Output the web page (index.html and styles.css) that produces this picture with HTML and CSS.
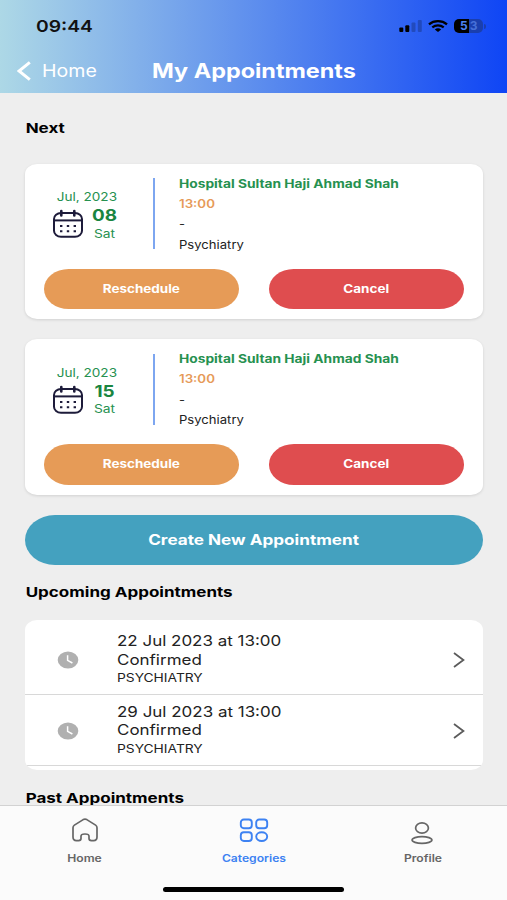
FILE: index.html
```html
<!DOCTYPE html>
<html lang="en">
<head>
    <meta charset="UTF-8">
    <meta name="viewport" content="width=device-width, initial-scale=1.0">
    <title>My Appointments</title>
    <link rel="stylesheet" href="styles.css">
</head>
<body>

<div class="app">
    <!-- Header -->
    <header class="header">
        <div class="status-bar">
            <span class="status-time">09:44</span>
            <div class="status-icons">
                <svg width="24" height="12" viewBox="0 0 24 12">
                    <rect x="0.3" y="7.5" width="4" height="4.5" rx="1"/>
                    <rect x="6.3" y="5.2" width="4" height="6.8" rx="1"/>
                    <rect x="12.5" y="2.6" width="4" height="9.4" rx="1" opacity="0.22"/>
                    <rect x="18.8" y="0" width="4" height="12" rx="1" opacity="0.22"/>
                </svg>
                <svg class="wifi" width="20" height="12" viewBox="0 0 20 12" fill="none" stroke="#000" stroke-width="2.3">
                    <path d="M1 4.3C6 0.1 14 0.1 19 4.3"/>
                    <path d="M4.3 7.3C7.6 4.7 12.4 4.7 15.7 7.3"/>
                    <path d="M10 12L6.8 9.4C8.6 8 11.4 8 13.2 9.4Z" fill="#000" stroke="none"/>
                </svg>
                <div class="battery"><span>5</span><span class="battery-low">3</span></div>
                <div class="battery-tip"></div>
            </div>
        </div>
        <div class="nav-bar">
            <a class="back" href="#">
                <svg width="14" height="20" viewBox="0 0 14 20" fill="none" stroke="#fff" stroke-width="3">
                    <path d="M12.8 1.4L2 10L12.8 18.6"/>
                </svg>
                <span class="back-label">Home</span>
            </a>
            <h1 class="title">My Appointments</h1>
        </div>
    </header>

    <main class="content">
        <h2 class="section-title">Next</h2>

        <div class="card">
            <div class="card-info">
                <div class="date">
                    <div class="month">Jul, 2023</div>
                    <div class="day-row">
                        <svg class="calendar" width="32" height="30" viewBox="0 0 32 30" fill="none" stroke="#1d1b3a" stroke-width="2">
                            <rect x="2" y="4" width="28" height="23.8" rx="7" ry="6"/>
                            <path d="M2.4 11.4H29.6"/>
                            <path d="M9.3 2V6.4M22.3 2V6.4" stroke-width="2.6" stroke-linecap="round"/>
                            <path d="M8 17h2.4M14.8 17h2.4M21.6 17h2.4M8 22.2h2.4M14.8 22.2h2.4M21.6 22.2h2.4" stroke-width="2"/>
                        </svg>
                        <div class="day">
                            <div class="day-number">08</div>
                            <div class="day-name">Sat</div>
                        </div>
                    </div>
                </div>
                <div class="details">
                    <div class="hospital">Hospital Sultan Haji Ahmad Shah</div>
                    <div class="time">13:00</div>
                    <div class="doctor">-</div>
                    <div class="clinic">Psychiatry</div>
                </div>
            </div>
            <div class="card-actions">
                <button class="btn btn-reschedule"><span>Reschedule</span></button>
                <button class="btn btn-cancel"><span>Cancel</span></button>
            </div>
        </div>

        <div class="card">
            <div class="card-info">
                <div class="date">
                    <div class="month">Jul, 2023</div>
                    <div class="day-row">
                        <svg class="calendar" width="32" height="30" viewBox="0 0 32 30" fill="none" stroke="#1d1b3a" stroke-width="2">
                            <rect x="2" y="4" width="28" height="23.8" rx="7" ry="6"/>
                            <path d="M2.4 11.4H29.6"/>
                            <path d="M9.3 2V6.4M22.3 2V6.4" stroke-width="2.6" stroke-linecap="round"/>
                            <path d="M8 17h2.4M14.8 17h2.4M21.6 17h2.4M8 22.2h2.4M14.8 22.2h2.4M21.6 22.2h2.4" stroke-width="2"/>
                        </svg>
                        <div class="day">
                            <div class="day-number">15</div>
                            <div class="day-name">Sat</div>
                        </div>
                    </div>
                </div>
                <div class="details">
                    <div class="hospital">Hospital Sultan Haji Ahmad Shah</div>
                    <div class="time">13:00</div>
                    <div class="doctor">-</div>
                    <div class="clinic">Psychiatry</div>
                </div>
            </div>
            <div class="card-actions">
                <button class="btn btn-reschedule"><span>Reschedule</span></button>
                <button class="btn btn-cancel"><span>Cancel</span></button>
            </div>
        </div>

        <button class="btn-create"><span>Create New Appointment</span></button>

        <h2 class="section-title upcoming">Upcoming Appointments</h2>

        <div class="list">
            <div class="list-item">
                <svg class="clock" width="22" height="18" viewBox="0 0 22 18">
                    <ellipse cx="11" cy="9" rx="10.3" ry="8.6" fill="#b0b0b0"/>
                    <path d="M10.6 4.2V9.4L15.4 12" fill="none" stroke="#fff" stroke-width="1.5"/>
                </svg>
                <div class="list-text">
                    <div class="when">22 Jul 2023 at 13:00</div>
                    <div class="state">Confirmed</div>
                    <div class="dept">PSYCHIATRY</div>
                </div>
                <svg class="chevron" width="12" height="16" viewBox="0 0 12 16" fill="none" stroke="#5c5c5c" stroke-width="1.8">
                    <path d="M1 1L10.4 8L1 15"/>
                </svg>
            </div>
            <div class="list-item">
                <svg class="clock" width="22" height="18" viewBox="0 0 22 18">
                    <ellipse cx="11" cy="9" rx="10.3" ry="8.6" fill="#b0b0b0"/>
                    <path d="M10.6 4.2V9.4L15.4 12" fill="none" stroke="#fff" stroke-width="1.5"/>
                </svg>
                <div class="list-text">
                    <div class="when">29 Jul 2023 at 13:00</div>
                    <div class="state">Confirmed</div>
                    <div class="dept">PSYCHIATRY</div>
                </div>
                <svg class="chevron" width="12" height="16" viewBox="0 0 12 16" fill="none" stroke="#5c5c5c" stroke-width="1.8">
                    <path d="M1 1L10.4 8L1 15"/>
                </svg>
            </div>
        </div>

        <h2 class="section-title past">Past Appointments</h2>
    </main>

    <!-- Bottom tabs -->
    <footer class="footer">
        <nav class="tabs">
            <a class="tab" href="#">
                <svg width="28" height="26" viewBox="0 0 28 26" fill="none" stroke="#666" stroke-width="1.7" stroke-linejoin="round">
                    <path d="M2 10.8Q2 9 3.4 8.1L12.2 2.6Q14 1.6 15.8 2.6L24.6 8.1Q26 9 26 10.8V20Q26 23.6 22.6 23.6H20.4Q18 23.6 18 21.6V19.2Q18 17 14 17T10 19.2V21.6Q10 23.6 7.6 23.6H5.4Q2 23.6 2 20Z"/>
                </svg>
                <span>Home</span>
            </a>
            <a class="tab active" href="#">
                <svg width="30" height="26" viewBox="0 0 30 26" fill="none" stroke="#3d82f2" stroke-width="1.9">
                    <rect x="1.8" y="2.5" width="11" height="8.8" rx="3"/>
                    <rect x="17.2" y="2.5" width="11" height="8.8" rx="3"/>
                    <rect x="1.8" y="15.2" width="11" height="8.8" rx="3"/>
                    <ellipse cx="22.7" cy="19.6" rx="5.5" ry="4.4"/>
                </svg>
                <span>Categories</span>
            </a>
            <a class="tab" href="#">
                <svg width="24" height="28" viewBox="0 0 24 28" fill="none" stroke="#666" stroke-width="1.7">
                    <ellipse cx="11" cy="11" rx="6.4" ry="5.2"/>
                    <ellipse cx="11" cy="23" rx="9.9" ry="3.4"/>
                </svg>
                <span>Profile</span>
            </a>
        </nav>
        <div class="home-indicator"></div>
    </footer>
</div>

</body>
</html>
```
FILE: styles.css
```css
/* Global */
* {
    box-sizing: border-box;
}

body {
    margin: 0;
    font-family: Inter, "Open Sans", sans-serif;
    background-color: #eeeeee;
    color: #111;
}

h1, h2 {
    margin: 0;
}

a {
    text-decoration: none;
}

.app {
    width: 507px;
    height: 900px;
    display: flex;
    flex-direction: column;
    overflow: hidden;
}

/* Header */
.header {
    height: 93px;
    flex-shrink: 0;
    background: linear-gradient(to right, #add8e6, #0f45f5);
}

.status-bar {
    display: flex;
    justify-content: space-between;
    align-items: center;
    height: 52px;
    padding: 0 21px 0 36px;
}

.status-time {
    font-size: 16.5px;
    font-weight: 600;
    transform: scaleX(1.17);
    transform-origin: left;
}

.status-icons {
    display: flex;
    align-items: center;
}

.wifi {
    margin: 0 6px 0 5px;
}

.battery {
    display: flex;
    width: 29px;
    height: 14px;
    border-radius: 5px;
    overflow: hidden;
    background: linear-gradient(to right, #000 52%, #1a3fae 52%);
    color: #4d83f5;
    font-size: 12px;
    font-weight: 700;
    line-height: 14px;
    padding-left: 6px;
    gap: 2px;
}

.battery-low {
    color: #4670d8;
}

.battery-tip {
    width: 2px;
    height: 5px;
    margin-left: 1px;
    border-radius: 0 2px 2px 0;
    background-color: #1a3fae;
}

.nav-bar {
    display: flex;
    align-items: center;
    height: 38px;
    padding-left: 17px;
}

.back {
    display: flex;
    align-items: center;
    width: 135px;
    gap: 11px;
    color: #fff;
}

.back-label {
    font-size: 17px;
    transform: scaleX(1.15);
    transform-origin: left;
}

.title {
    font-size: 19.5px;
    font-weight: 700;
    color: #fff;
    white-space: nowrap;
    transform: scaleX(1.2);
    transform-origin: left;
}

/* Content */
.content {
    flex: 1;
    min-height: 0;
    padding: 25px 24.5px 0 25px;
    overflow: hidden;
}

.section-title {
    padding-left: 0.5px;
    font-size: 13.5px;
    font-weight: 700;
    line-height: 20px;
    color: #000;
    white-space: nowrap;
    transform: scaleX(1.26);
    transform-origin: left;
}

/* Appointment card */
.card {
    height: 155.5px;
    margin-top: 25.5px;
    padding: 9.5px 18.5px 0;
    background-color: #fff;
    border-radius: 12px / 10px;
    box-shadow: 0 1px 3px rgba(0, 0, 0, 0.12);
}

.card + .card {
    margin-top: 20px;
}

.card-info {
    display: flex;
    height: 95.5px;
}

.date {
    width: 111.5px;
    height: 71px;
    margin-top: 5px;
    padding: 10px 0 0 8px;
    border-right: 2px solid #7da6f0;
    color: #269150;
    font-size: 11.3px;
}

.month {
    padding-left: 4px;
    line-height: 18px;
    transform: scaleX(1.2);
    transform-origin: left;
}

.day-row {
    display: flex;
    gap: 3px;
}

.calendar {
    margin-top: 3px;
}

.day {
    width: 35px;
    text-align: center;
}

.day-number {
    font-size: 16px;
    font-weight: 700;
    line-height: 19.5px;
    color: #1a8540;
    transform: scaleX(1.18);
}

.day-name {
    line-height: 17px;
    transform: scaleX(1.22);
}

.details {
    padding: 0.7px 0 0 24px;
    font-size: 11.2px;
    line-height: 20.3px;
    color: #222;
}

.details div {
    transform: scaleX(1.17);
    transform-origin: left;
    white-space: nowrap;
}

.details .hospital {
    font-weight: 700;
    color: #269150;
    transform: scaleX(1.23);
}

.details .time {
    font-weight: 600;
    color: #e69a58;
    transform: scaleX(1.19);
}

.card-actions {
    display: flex;
    gap: 30px;
}

.btn {
    flex: 1;
    height: 40.5px;
    padding: 0;
    border: none;
    border-radius: 25px / 20.25px;
    color: #fff;
    font-family: inherit;
    font-size: 11.3px;
    font-weight: 700;
}

.btn span,
.btn-create span {
    display: inline-block;
    transform: scaleX(1.19);
}

.btn-reschedule {
    background-color: #e69b57;
}

.btn-cancel {
    background-color: #df4d4f;
}

.btn-create {
    display: block;
    width: 100%;
    height: 50px;
    margin-top: 20px;
    padding: 0;
    border: none;
    border-radius: 30px / 25px;
    background-color: #44a1bf;
    color: #fff;
    font-family: inherit;
    font-size: 14.4px;
    font-weight: 700;
}

.upcoming {
    margin-top: 17.5px;
}

/* Upcoming list */
.list {
    height: 150.5px;
    margin-top: 17.5px;
    padding-top: 5px;
    background-color: #fff;
    border-radius: 12px / 10px;
    overflow: hidden;
}

.list-item {
    display: flex;
    align-items: center;
    height: 70.5px;
    padding: 1.5px 17.5px 0 32px;
    border-bottom: 1.5px solid #d8d8d8;
}

.list-text {
    flex: 1;
    padding-left: 37.5px;
    font-size: 14.5px;
    line-height: 18.5px;
    color: #222;
}

.list-text div {
    transform: scaleX(1.17);
    transform-origin: left;
}

.list-text .dept {
    font-size: 11.3px;
    transform: scaleX(1.22);
}

.past {
    margin-top: 17.5px;
}

/* Bottom tabs */
.footer {
    height: 95px;
    flex-shrink: 0;
    background-color: #fbfbfb;
    border-top: 1px solid #d2d2d2;
}

.tabs {
    display: flex;
    height: 78px;
}

.tab {
    flex: 1;
    display: flex;
    flex-direction: column;
    align-items: center;
    padding-top: 11px;
    color: #666;
    font-size: 10.2px;
    font-weight: 600;
}

.tab svg {
    flex-shrink: 0;
}

.tab span {
    margin-top: auto;
    margin-bottom: 20px;
    line-height: 12px;
    transform: scaleX(1.19);
}

.tab.active {
    color: #3d82f2;
}

.home-indicator {
    width: 181px;
    height: 5px;
    margin: 3px auto 0;
    border-radius: 3px;
    background-color: #000;
}
```
